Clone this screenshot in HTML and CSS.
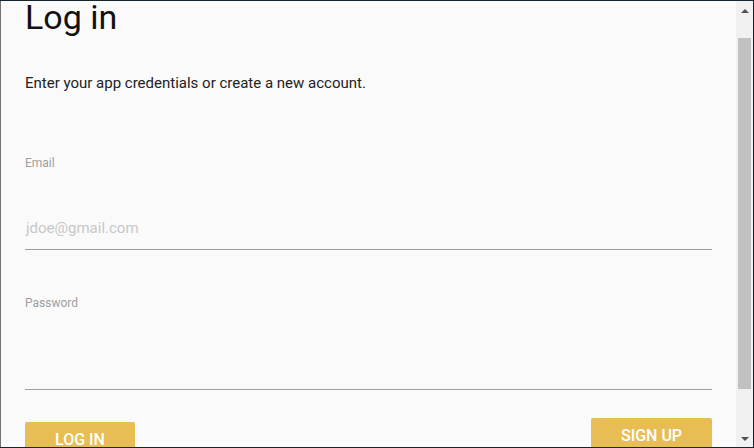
FILE: index.html
```html
<!DOCTYPE html>
<html lang="en">
<head>
<meta charset="utf-8">
<title>Log in</title>
<link rel="stylesheet" href="styles.css">
</head>
<body>
<div class="frame">
  <div class="content">
    <h1 class="title">Log in</h1>
    <p class="subtitle">Enter your app credentials or create a new account.</p>
    <div class="field">
      <label class="label">Email</label>
      <div class="input placeholder">jdoe@gmail.com</div>
    </div>
    <div class="field">
      <label class="label">Password</label>
      <div class="input"></div>
    </div>
    <div class="actions">
      <button class="btn btn-login">LOG IN</button>
      <button class="btn btn-signup">SIGN UP</button>
    </div>
  </div>
  <div class="scrollbar">
    <div class="sb-btn"><span class="arrow-up"></span></div>
    <div class="sb-track"><div class="sb-thumb"></div></div>
    <div class="sb-btn"><span class="arrow-down"></span></div>
  </div>
</div>
</body>
</html>
```
FILE: styles.css
```css
* { box-sizing: border-box; }
html, body { margin: 0; padding: 0; }
body {
  background: #17242b;
  width: 754px;
  height: 448px;
  overflow: hidden;
  font-family: Roboto, "Liberation Sans", sans-serif;
}
.frame {
  margin-top: 1px;
  width: 753px;
  height: 446px;
  border-left: 1px solid #747474;
  background: #fafafa;
  display: flex;
}
.content {
  flex: 1;
  padding: 0 24px 0 24px;
  overflow: hidden;
}
.title {
  margin: -4px 0 0;
  font-size: 34px;
  line-height: 40px;
  font-weight: 400;
  color: #111;
}
.subtitle {
  margin: 36px 0 0;
  font-size: 15px;
  line-height: 20px;
  color: #222;
}
.field { display: flex; flex-direction: column; }
.subtitle + .field { margin-top: 62px; }
.field + .field { margin-top: 45px; }
.label {
  font-size: 12px;
  line-height: 16px;
  color: #9e9e9e;
}
.input {
  margin-top: 47px;
  height: 32px;
  font-size: 15px;
  line-height: 20px;
  padding: 0 0 11px 1px;
  border-bottom: 1px solid #9e9e9e;
  color: #222;
}
.input.placeholder { color: #c8c8c8; }
.actions {
  margin-top: 28px;
  display: flex;
  justify-content: space-between;
  align-items: flex-start;
}
.btn {
  border: none;
  border-radius: 2px;
  background: #e8bd53;
  color: #fff;
  font-family: Roboto, "Liberation Sans", sans-serif;
  font-size: 16px;
  font-weight: 500;
  line-height: 36px;
  height: 36px;
  padding: 0;
  text-align: center;
}
.btn-login { width: 110px; margin-top: 4px; }
.btn-signup { width: 121px; }
.scrollbar {
  width: 17px;
  background: #f1f1f1;
  display: flex;
  flex-direction: column;
}
.sb-btn {
  height: 17px;
  display: flex;
  align-items: center;
  justify-content: center;
}
.arrow-up, .arrow-down {
  width: 0;
  height: 0;
  border-left: 4px solid transparent;
  border-right: 4px solid transparent;
}
.arrow-up { border-bottom: 4px solid #505050; margin-top: 2px; }
.arrow-down { border-top: 4px solid #505050; margin-top: 1px; }
.sb-track {
  flex: 1;
  padding: 20px 2px 0;
}
.sb-thumb {
  height: 351px;
  background: #c1c1c1;
}
```
